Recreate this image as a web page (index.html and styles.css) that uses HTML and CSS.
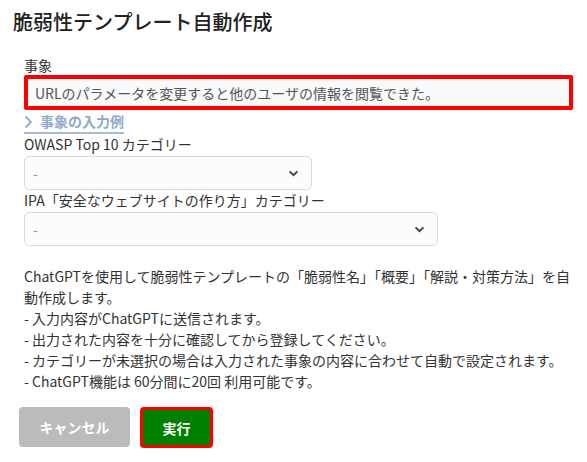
FILE: index.html
```html
<!DOCTYPE html>
<html lang="ja">
<head>
    <meta charset="UTF-8">
    <title>脆弱性テンプレート自動作成</title>
    <link rel="stylesheet" href="styles.css">
</head>
<body>
    <div class="modal">
        <h2 class="modal-title">脆弱性テンプレート自動作成</h2>

        <div class="modal-body">
            <label class="field-label">事象</label>
            <input type="text" class="event-input" value="URLのパラメータを変更すると他のユーザの情報を閲覧できた。">
            <a class="example-link">
                <svg class="chevron" width="9" height="14" viewBox="0 0 9 14"><path d="M1.5 1.5 L7 7 L1.5 12.5" fill="none" stroke="#8eabc8" stroke-width="1.8"/></svg>
                事象の入力例
            </a>

            <label class="field-label">OWASP Top 10 カテゴリー</label>
            <select class="select owasp">
                <option>-</option>
            </select>

            <label class="field-label">IPA「安全なウェブサイトの作り方」カテゴリー</label>
            <select class="select ipa">
                <option>-</option>
            </select>

            <p class="notes">ChatGPTを使用して脆弱性テンプレートの「脆弱性名」「概要」「解説・対策方法」を自動作成します。<br>
            - 入力内容がChatGPTに送信されます。<br>
            - 出力された内容を十分に確認してから登録してください。<br>
            - カテゴリーが未選択の場合は入力された事象の内容に合わせて自動で設定されます。<br>
            - ChatGPT機能は 60分間に20回 利用可能です。</p>
        </div>

        <div class="modal-footer">
            <button class="btn btn-cancel" disabled>キャンセル</button>
            <button class="btn btn-run">実行</button>
        </div>
    </div>
</body>
</html>
```

FILE: styles.css
```css
body {
    margin: 0;
    background-color: #fff;
    font-family: "Noto Sans CJK JP", "Noto Sans", sans-serif;
    color: #333;
}
.modal {
    padding: 8px 0 0 0;
}
.modal-title {
    margin: 0 0 0 13px;
    font-size: 20px;
    font-weight: 500;
    line-height: 28px;
    color: #222;
}
.modal-body {
    padding: 19px 14px 0 24px;
    display: flex;
    flex-direction: column;
    align-items: flex-start;
}
.field-label {
    font-size: 14px;
    line-height: 20px;
    color: #333;
}
.event-input {
    box-sizing: border-box;
    width: 549px;
    height: 35px;
    margin-top: 0;
    padding: 0 7px;
    border: 4px solid #f00;
    border-radius: 2px;
    background-color: #f9fafc;
    font-family: inherit;
    font-size: 14px;
    color: #555;
    outline: none;
}
.example-link {
    display: flex;
    align-items: center;
    gap: 7px;
    margin-top: 2px;
    padding-bottom: 1px;
    border-bottom: 2px solid #a7bcd2;
    font-size: 14px;
    font-weight: bold;
    line-height: 19px;
    color: #8eabc8;
}
.chevron {
    margin-left: 0;
}
.select {
    box-sizing: border-box;
    height: 34px;
    margin-top: 2px;
    padding: 0 8px;
    border: 1px solid #dcdcdc;
    border-radius: 5px;
    background-color: #fcfcfd;
    font-family: inherit;
    font-size: 14px;
    color: #999;
    appearance: none;
    background-image: url("data:image/svg+xml;utf8,<svg xmlns='http://www.w3.org/2000/svg' width='12' height='8' viewBox='0 0 12 8'><path d='M1.5 1.5 L6 6 L10.5 1.5' fill='none' stroke='%23444' stroke-width='2.2'/></svg>");
    background-repeat: no-repeat;
    background-position: right 12px center;
    background-size: 11px 7px;
}
.owasp {
    width: 288px;
}
.ipa {
    width: 414px;
}
.notes {
    margin: 20px 0 0 0;
    font-size: 14px;
    line-height: 21px;
    color: #333;
}
.modal-footer {
    display: flex;
    gap: 10px;
    padding: 15px 0 0 19px;
}
.btn {
    box-sizing: border-box;
    height: 40px;
    border-radius: 4px;
    font-family: inherit;
    font-size: 14px;
    font-weight: bold;
    color: #fff;
}
.btn-cancel {
    width: 111px;
    border: none;
    background-color: #bbb;
}
.btn-run {
    width: 73px;
    height: 41px;
    border: 3px solid #f00;
    background-color: #008000;
}
```
